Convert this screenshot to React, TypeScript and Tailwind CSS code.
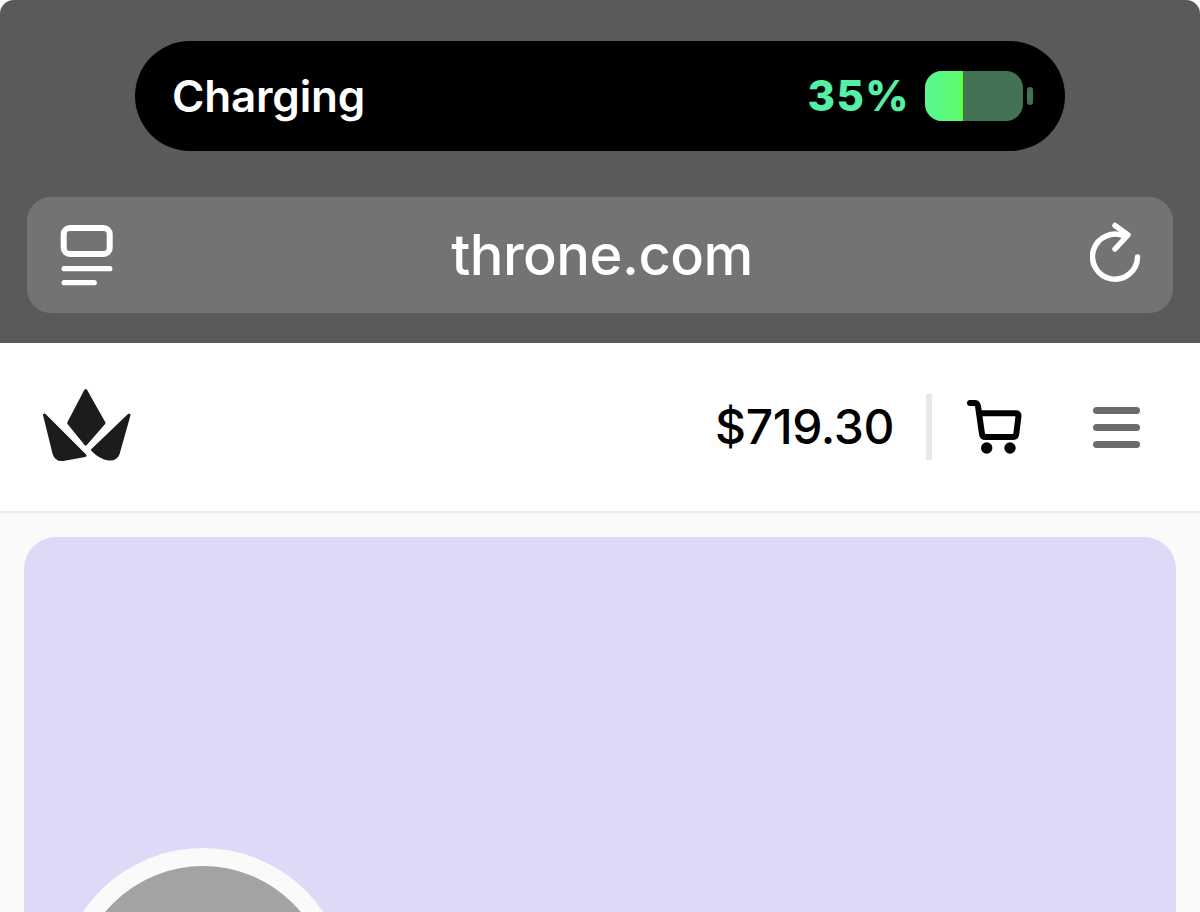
export default function App() {
  return (
    <div className="w-[1200px] h-[912px] overflow-hidden bg-[#fafafa] font-['Inter','Liberation_Sans',sans-serif]">
      {/* Browser chrome */}
      <div className="h-[343px] bg-[#5a5a5a] rounded-t-[14px] px-[27px] pt-[41px] flex flex-col">
        <div className="mx-[108px] h-[110px] rounded-[55px] bg-black flex items-center pl-[37px] pr-[32px]">
          <span className="text-white text-[44px] leading-none font-semibold tracking-[-0.2px]">Charging</span>
          <span className="ml-auto text-[#55f0a8] text-[42px] leading-none font-extrabold tracking-[1.4px]">35%</span>
          <div className="ml-[15px] w-[98px] h-[50px] rounded-[17px] overflow-hidden bg-[#427153] flex">
            <div className="w-[38px] h-full bg-gradient-to-r from-[#58f992] to-[#5efb6c] border-r-2 border-[#66ff2e]" />
          </div>
          <div className="ml-[4px] w-[6px] h-[18px] rounded-full bg-[#427153]" />
        </div>
        <div className="mt-[46px] h-[116px] rounded-[24px] bg-[#737373] flex items-center justify-between pl-[33px] pr-[31px]">
          <svg width="54" height="62" viewBox="0 0 54 62" fill="none" stroke="white" strokeLinecap="round">
            <rect x="3.700" y="4" width="46" height="26" rx="6" strokeWidth="6" />
            <path d="M4.200 44.700H49.800" strokeWidth="5.300" />
            <path d="M4.200 58.700H34.200" strokeWidth="5.300" />
          </svg>
          <span className="text-white text-[56px] leading-none font-medium tracking-[-0.5px]">throne.com</span>
          <svg width="52" height="62" viewBox="0 0 52 62" fill="none" stroke="white" strokeWidth="5.500" strokeLinecap="round" strokeLinejoin="round" className="-mt-[4px]">
            <path d="M35 14.500A22.500 22.500 0 1 0 47.500 35" />
            <path d="M25 3.500L38 13L25 27" />
          </svg>
        </div>
      </div>

      {/* Site header */}
      <header className="h-[170px] bg-white border-b-2 border-[#ebebeb] flex items-center pl-[42px] pr-[60px]">
        <svg width="90" height="76" viewBox="0 0 90 76" fill="#1c1c1c" stroke="#1c1c1c" strokeWidth="3" strokeLinejoin="round" className="-mt-[4px]">
          <path d="M43.700 3.500L62 36L43.700 57L26.700 36Z" />
          <path d="M2.500 28L43 68.500L21 72.500C16 73 13.500 71 12 66.500Z" />
          <path d="M87 28L76 67C74.500 71 71.500 72.500 66.500 72C59 71 54 66.500 50.500 63Z" />
        </svg>
        <span className="ml-auto text-black text-[48px] leading-none font-medium tracking-[-0.4px]">$719.30</span>
        <div className="ml-[32px] w-[6px] h-[66px] bg-[#e8e8e8]" />
        <svg width="56" height="56" viewBox="0 0 56 56" fill="none" className="ml-[35px]">
          <path d="M3 4H7.500C9.500 4 10.500 5 11 7L15 35C15.300 37 16.500 38 18.500 38H46C48 38 49 37 49.300 35L51.500 17C51.700 15 50.500 14.300 49 14.300H12" stroke="black" strokeWidth="6" strokeLinecap="round" strokeLinejoin="round" />
          <circle cx="19.700" cy="49" r="5.700" fill="black" />
          <circle cx="43" cy="49" r="5.700" fill="black" />
        </svg>
        <div className="ml-[70px] w-[47px] flex flex-col gap-[10px]">
          <div className="h-[7px] rounded-full bg-[#6b6b6b]" />
          <div className="h-[7px] rounded-full bg-[#6b6b6b]" />
          <div className="h-[7px] rounded-full bg-[#6b6b6b]" />
        </div>
      </header>

      {/* Content */}
      <main className="pt-[24px] px-[24px]">
        <div className="h-[500px] rounded-t-[32px] bg-[#ddd9f6] pt-[311px] pl-[34px]">
          <div className="w-[290px] h-[290px] rounded-full bg-[#a3a3a3] border-[18px] border-[#fafafa]" />
        </div>
      </main>
    </div>
  );
}
